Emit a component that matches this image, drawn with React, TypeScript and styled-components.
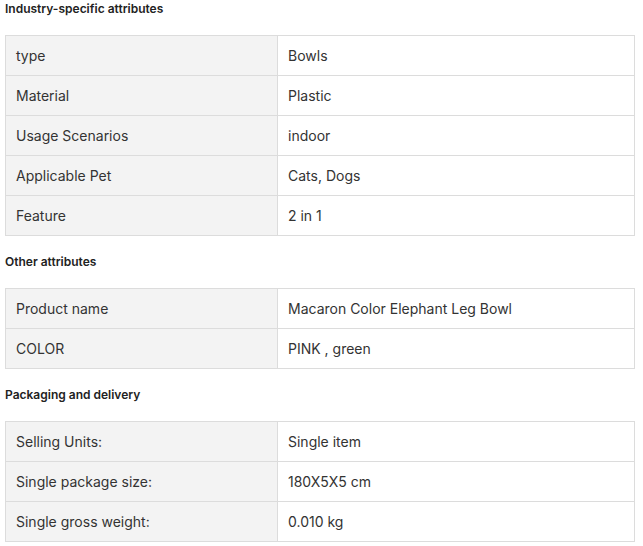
import React from "react";
import styled, { createGlobalStyle } from "styled-components";

const Global = createGlobalStyle`
  html, body { margin: 0; padding: 0; background: #fff; }
  body { font-family: Inter, "Noto Sans", sans-serif; color: #333; }
`;

const Page = styled.div`
  padding: 0 5px;
  width: 630px;
`;

const Section = styled.section`
  & + & { margin-top: 17px; }
`;

const Heading = styled.h3`
  margin: 0 0 17px;
  font-size: 12px;
  line-height: 18px;
  font-weight: 600;
  color: #222;
`;

const Table = styled.table`
  width: 630px;
  border-collapse: collapse;
  table-layout: fixed;
`;

const Cell = styled.td<{ $label?: boolean }>`
  height: 40px;
  box-sizing: border-box;
  padding: 0 10px;
  border: 1px solid #dcdcdc;
  font-size: 14px;
  line-height: 20px;
  color: #333;
  background: ${(p) => (p.$label ? "#f3f3f3" : "#fff")};
  width: ${(p) => (p.$label ? "272px" : "auto")};
  vertical-align: middle;
`;

const sections: { title: string; rows: [string, string][] }[] = [
  {
    title: "Industry-specific attributes",
    rows: [
      ["type", "Bowls"],
      ["Material", "Plastic"],
      ["Usage Scenarios", "indoor"],
      ["Applicable Pet", "Cats, Dogs"],
      ["Feature", "2 in 1"],
    ],
  },
  {
    title: "Other attributes",
    rows: [
      ["Product name", "Macaron Color Elephant Leg Bowl"],
      ["COLOR", "PINK , green"],
    ],
  },
  {
    title: "Packaging and delivery",
    rows: [
      ["Selling Units:", "Single item"],
      ["Single package size:", "180X5X5 cm"],
      ["Single gross weight:", "0.010 kg"],
    ],
  },
];

export default function App() {
  return (
    <>
      <Global />
      <Page>
        {sections.map((s) => (
          <Section key={s.title}>
            <Heading>{s.title}</Heading>
            <Table>
              <tbody>
                {s.rows.map(([k, v]) => (
                  <tr key={k}>
                    <Cell $label>{k}</Cell>
                    <Cell>{v}</Cell>
                  </tr>
                ))}
              </tbody>
            </Table>
          </Section>
        ))}
      </Page>
    </>
  );
}
